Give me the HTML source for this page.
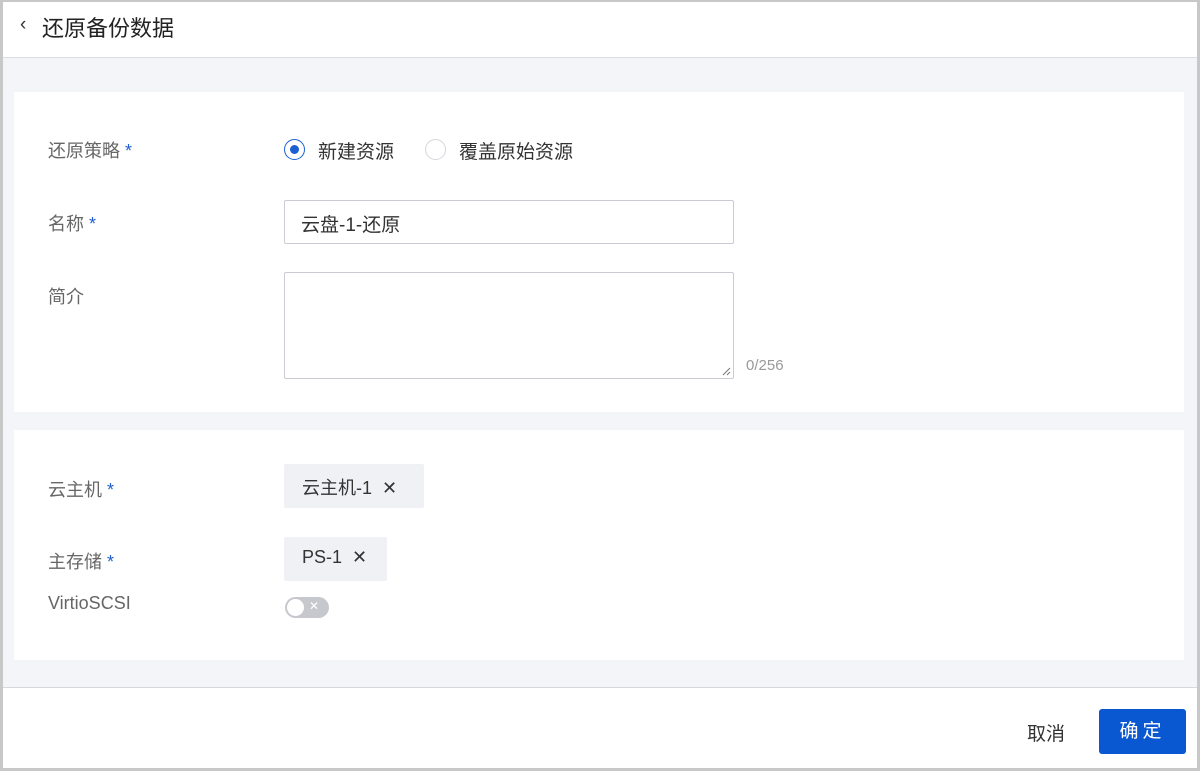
<!DOCTYPE html>
<html><head><meta charset="utf-8"><style>
*{box-sizing:border-box;margin:0;padding:0}
body{width:1200px;height:771px;background:#c8c8c8;font-family:"Liberation Sans","Noto Sans CJK SC",sans-serif;position:relative;overflow:hidden}
.frame{position:absolute;left:3px;top:2px;width:1194px;height:766px;background:#f4f5f8}
.hdr{position:absolute;left:0;top:0;width:100%;height:56px;background:#fff;border-bottom:1px solid #dcdde1}
.hdr .t{position:absolute;left:39px;top:9px;font-size:22px;color:#222}
.hdr .b{position:absolute;left:17px;top:12px;font-size:19px;color:#333}
.card{position:absolute;left:11px;width:1170px;background:#fff}
.lbl{position:absolute;left:34px;font-size:18px;color:#666}
.lbl i{font-style:normal;color:#2060d0}
.ft{position:absolute;left:0;top:685px;width:100%;height:81px;background:#fff;border-top:1px solid #d8d8dc}
.in{position:absolute;left:270px;border:1px solid #c9ccd3;border-radius:2px;background:#fff}
.tag{position:absolute;left:270px;height:44px;background:#eff1f5;border-radius:2px;font-size:18px;color:#333;padding:10px 0 0 18px}
</style></head><body>
<div class="frame">
 <div class="hdr"><span class="b">‹</span><span class="t">还原备份数据</span></div>
 <div class="card" style="top:90px;height:320px">
  <div class="lbl" style="top:45px">还原策略 <i>*</i></div>
  <div style="position:absolute;left:270px;top:47px;width:21px;height:21px;border:1.5px solid #1c5fd0;border-radius:50%"><div style="position:absolute;left:4.5px;top:4.5px;width:9px;height:9px;border-radius:50%;background:#1c5fd0"></div></div>
  <div style="position:absolute;left:304px;top:45px;font-size:19px;color:#333">新建资源</div>
  <div style="position:absolute;left:411px;top:47px;width:21px;height:21px;border:1px solid #d4d6dc;border-radius:50%"></div>
  <div style="position:absolute;left:445px;top:45px;font-size:19px;color:#333">覆盖原始资源</div>
  <div class="lbl" style="top:118px">名称 <i>*</i></div>
  <div class="in" style="top:108px;width:450px;height:44px;font-size:19px;color:#333;padding:9px 0 0 16px">云盘-1-还原</div>
  <div class="lbl" style="top:191px">简介</div>
  <div class="in" style="top:180px;width:450px;height:107px"><svg style="position:absolute;right:2px;bottom:2px" width="10" height="10"><path d="M9 2L2 9M9 6L6 9" stroke="#777"/></svg></div>
  <div style="position:absolute;left:732px;top:265px;font-size:15px;color:#999">0/256</div>
 </div>
 <div class="card" style="top:428px;height:230px">
  <div class="lbl" style="top:46px">云主机 <i>*</i></div>
  <div class="tag" style="top:34px;width:140px">云主机-1 &nbsp;✕</div>
  <div class="lbl" style="top:118px">主存储 <i>*</i></div>
  <div class="tag" style="top:107px;width:103px">PS-1 &nbsp;✕</div>
  <div class="lbl" style="top:163px">VirtioSCSI</div>
  <div style="position:absolute;left:271px;top:167px;width:44px;height:21px;border-radius:11px;background:#c6c8cd"><div style="position:absolute;left:2px;top:2px;width:17px;height:17px;border-radius:50%;background:#fff"></div><span style="position:absolute;left:24px;top:2px;color:#fff;font-size:12px">✕</span></div>
 </div>
 <div class="ft">
  <div style="position:absolute;left:1024px;top:31px;font-size:19px;color:#333">取消</div>
  <div style="position:absolute;left:1096px;top:21px;width:87px;height:45px;background:#0a57d2;border-radius:3px;color:#fff;font-size:19px;text-align:center;line-height:45px;letter-spacing:4px">确定</div>
 </div>
</div>
</body></html>
